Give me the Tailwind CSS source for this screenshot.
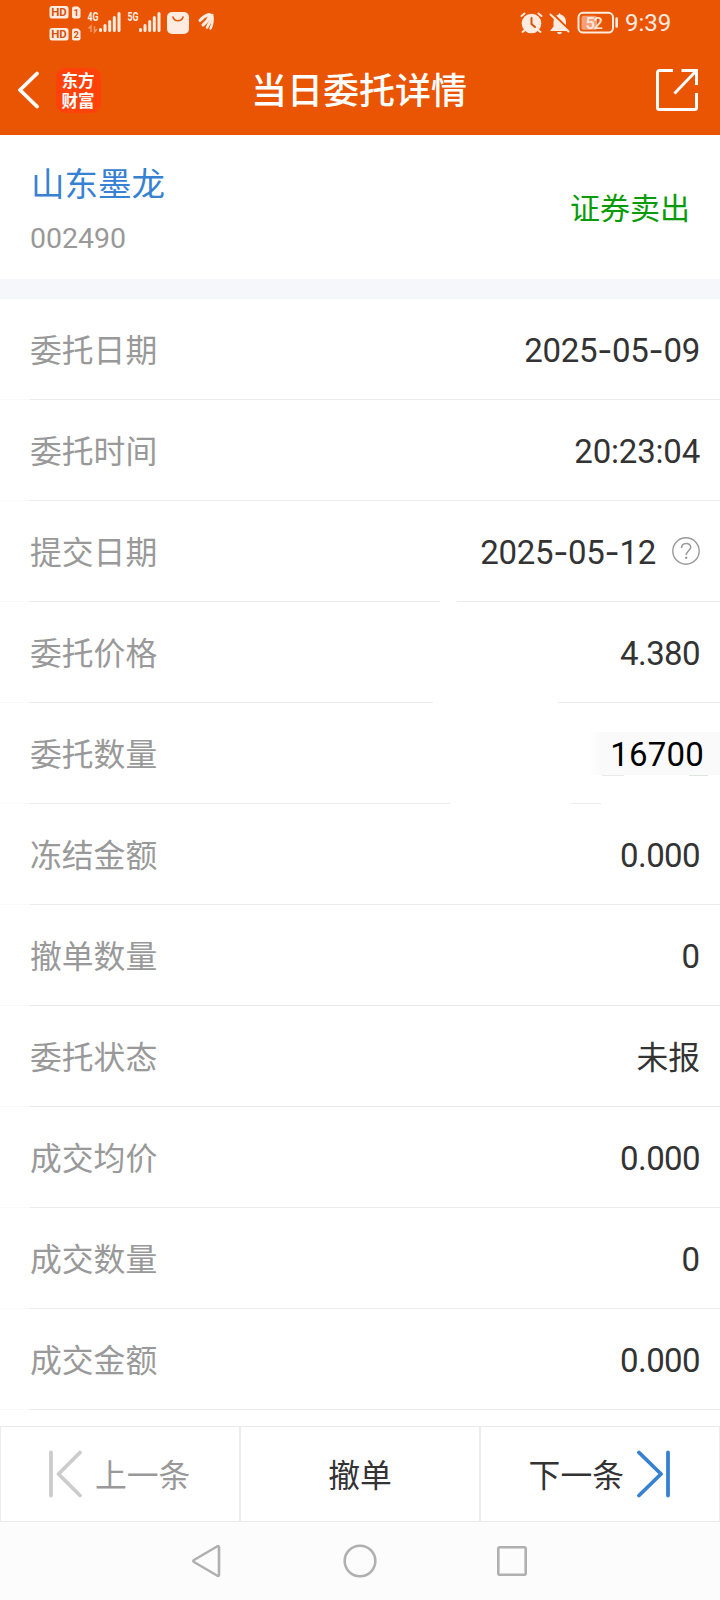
<!DOCTYPE html>
<html lang="zh-CN">
<head>
  <meta charset="UTF-8">
  <title>当日委托详情</title>
  <meta name="viewport" content="width=device-width, initial-scale=1.0">
  <script src="https://cdn.jsdelivr.net/npm/@tailwindcss/browser@4"></script>
</head>

<body class="w-[720px] h-[1600px] overflow-hidden flex flex-col bg-white text-[#333] font-['Roboto','Noto_Sans_CJK_SC',sans-serif]">
  <header class="h-[135px] shrink-0 bg-[#ea5504] text-white">
    <!-- Status bar -->
    <div class="h-[45px] flex items-center justify-between pl-[49px] pr-[49px] text-[#ffece0]">
      <div class="flex items-start">
        <svg class="w-[170px] h-[45px]" viewBox="49 0 170 45" fill="currentColor">
          <g>
            <rect x="49.500" y="6" width="19" height="12.500" rx="2.500" />
            <path d="M72 8.500a2 2 0 0 1 2-2h4l2.500 2.500v7.500a2 2 0 0 1-2 2H74a2 2 0 0 1-2-2z" />
            <rect x="49.500" y="28" width="19" height="12.500" rx="2.500" />
            <path d="M72 30.500a2 2 0 0 1 2-2h4l2.500 2.500v7.500a2 2 0 0 1-2 2H74a2 2 0 0 1-2-2z" />
          </g>
          <g fill="#d9520c" font-family="Roboto, sans-serif" font-weight="700">
            <text x="51.300" y="16.400" font-size="11.500" textLength="15.500">HD</text>
            <text x="73.500" y="16" font-size="9.500">1</text>
            <text x="51.300" y="38.400" font-size="11.500" textLength="15.500">HD</text>
            <text x="73.500" y="38" font-size="9.500">2</text>
          </g>
          <g font-family="Roboto, sans-serif" font-weight="700" font-size="12.500">
            <text x="87.500" y="21" textLength="11" lengthAdjust="spacingAndGlyphs">4G</text>
            <text x="127.500" y="21" textLength="11" lengthAdjust="spacingAndGlyphs">5G</text>
          </g>
          <path d="M91 32v-6l-2.500 2.500M94.500 26v6l2.500-3" fill="none" stroke="currentColor" stroke-width="1.500" opacity=".45" />
          <g fill="none" stroke="currentColor" stroke-width="3" stroke-linecap="round">
            <path d="M100.500 29.500v1M105 25.500v5M109.700 21.500v9M114.300 17.500v13M119 13.500v17" />
            <path d="M140.500 29.500v1M145 25.500v5M149.700 21.500v9M154.300 17.500v13M159 13.500v17" />
          </g>
          <rect x="167" y="12" width="22" height="22" rx="5" />
          <path d="M173 17c1.500 5 8.500 5 10 0" fill="none" stroke="#ea5504" stroke-width="1.600" stroke-linecap="round" />
          <!-- Four fanned feathers -->
          <g fill="none" stroke="currentColor" stroke-linecap="round">
            <path d="M200 20.500q3.500-4.500 9-6" stroke-width="3" />
            <path d="M203 25q4.500-3.500 7.500-10" stroke-width="3" />
            <path d="M207 27.500q3.500-5 4.500-12" stroke-width="2.600" />
            <path d="M210.500 28.500q3-6 1.800-13.500" stroke-width="2.400" />
          </g>
        </svg>
      </div>
      <div class="flex items-center">
        <svg class="w-[100px] h-[45px]" viewBox="519 0 100 45" fill="none" stroke="currentColor" stroke-linecap="round">
          <circle cx="531.500" cy="23.500" r="9.800" fill="currentColor" stroke="none" />
          <path d="M521.500 16l3-2.500M541.500 16l-3-2.500M525 30l-2.500 2M538 30l2.500 2" stroke-width="2" />
          <path d="M531.500 18v6l3.500 3" stroke="#d9520c" stroke-width="2" />
          <path d="M550 31l3.500-4.500V22q0-6 5-7.500 1-3 2 0 5.500 1.500 5.500 7.500v4.500l3.500 4.500z" fill="currentColor" stroke="none" />
          <path d="M557 32h5q-.5 2.300-2.500 2.300T557 32z" fill="currentColor" stroke="none" />
          <path d="M552 13l19 18.500" stroke="#ea5504" stroke-width="2.200" />
          <path d="M550.500 14.500l18 17" stroke-width="2" />
          <rect x="578.500" y="12.800" width="34.500" height="19.800" rx="4.500" stroke-width="2" />
          <rect x="581.500" y="15.800" width="15.500" height="14" rx="2" fill="#f3a078" stroke="none" />
          <path d="M616.700 18.500v8" stroke-width="2.600" />
          <text x="585.500" y="28.600" font-family="Roboto, sans-serif" font-size="16.500" font-weight="500" fill="currentColor" stroke="none" textLength="17.500">52</text>
        </svg>
        <span class="w-[52px] pl-[6px] pt-[2px] text-[24px] leading-[43px] whitespace-nowrap">9:39</span>
      </div>
    </div>
    <!-- Title bar -->
    <div class="h-[90px] grid grid-cols-3 items-center pl-[17px] pr-[21px]">
      <div class="flex items-center gap-[16px]">
        <svg class="w-[23px] h-[38px]" viewBox="0 0 23 38" fill="none" stroke="currentColor" stroke-width="3.800" stroke-linecap="round" stroke-linejoin="round">
          <path d="M20 2.500L3 19l17 16.500" />
        </svg>
        <p class="w-[45px] h-[45px] pt-[2px] pr-px rounded-[9px] bg-[#ff4209] text-center font-['Noto_Sans_CJK_SC',sans-serif] font-bold text-[16.500px] leading-[20px]">东方<br>财富</p>
      </div>
      <h1 class="pl-[2px] pt-[5px] text-center text-[36px] leading-[45px] font-medium whitespace-nowrap">当日委托详情</h1>
      <svg class="w-[44px] h-[44px] justify-self-end" viewBox="0 0 44 44" fill="none" stroke="currentColor" stroke-width="3">
        <path d="M18 2.500H4.500a2 2 0 0 0-2 2v35a2 2 0 0 0 2 2h35a2 2 0 0 0 2-2V25M26.500 2.500h15V17M41 3L19.500 25.500" />
      </svg>
    </div>
  </header>

  <main class="flex-1">
    <section class="h-[144px] pt-[2px] flex items-center justify-between pl-[30px] pr-[30px]">
      <div>
        <h2 class="pl-px text-[33.500px] leading-[48px] text-[#3681d2]">山东墨龙</h2>
        <p class="mt-[10px] mb-[-3px] text-[28.500px] leading-[40px] text-[#999]">002490</p>
      </div>
      <span class="pt-[2px] text-[30px] leading-[40px] text-[#0a9b0a]">证券卖出</span>
    </section>
    <div class="h-[20px] bg-[#f5f7fa]"></div>

    <dl class="text-[33px]">
      <div class="relative h-[101px] pt-[2px] pl-[30px] pr-[20px] flex items-center justify-between">
        <dt class="pt-[2px] text-[31.800px] text-[#999]">委托日期</dt>
        <dd class="tracking-[-0.3px]">2025<span class="font-['Inter']">-</span>05<span class="font-['Inter']">-</span>09</dd>
        <i class="absolute bottom-0 left-0 w-[30px] h-px bg-[#f9f9f9]"></i>
        <i class="absolute bottom-0 left-[30px] right-0 h-px bg-[#ebebeb]"></i>
      </div>
      <div class="relative h-[101px] pt-[2px] pl-[30px] pr-[20px] flex items-center justify-between">
        <dt class="pt-[2px] text-[31.800px] text-[#999]">委托时间</dt>
        <dd class="tracking-[-0.2px]">20:23:04</dd>
        <i class="absolute bottom-0 left-0 w-[30px] h-px bg-[#f9f9f9]"></i>
        <i class="absolute bottom-0 left-[30px] right-0 h-px bg-[#ebebeb]"></i>
      </div>
      <div class="relative h-[101px] pt-[2px] pl-[30px] pr-[20px] flex items-center justify-between">
        <dt class="pt-[2px] text-[31.800px] text-[#999]">提交日期</dt>
        <dd class="flex items-center gap-[16px]">
          <span class="tracking-[-0.3px]">2025<span class="font-['Inter']">-</span>05<span class="font-['Inter']">-</span>12</span>
          <svg class="w-[28px] h-[28px] mb-[4px]" viewBox="0 0 28 28" fill="none" stroke="#999" stroke-width="1.400">
            <circle cx="14" cy="14" r="13.200" />
            <path d="M9.500 11c0-6 9.200-6 9.200-.8 0 3.300-4.500 3.800-4.500 7.800" stroke-width="1.500" />
            <circle cx="14.200" cy="20.800" r="1.200" fill="#999" stroke="none" />
          </svg>
        </dd>
        <i class="absolute bottom-0 left-0 w-[30px] h-px bg-[#f9f9f9]"></i>
        <i class="absolute bottom-0 left-[30px] w-[410px] h-px bg-[#ebebeb]"></i>
        <i class="absolute bottom-0 left-[457px] right-0 h-px bg-[#ebebeb]"></i>
      </div>
      <div class="relative h-[101px] pt-[2px] pl-[30px] pr-[20px] flex items-center justify-between">
        <dt class="pt-[2px] text-[31.800px] text-[#999]">委托价格</dt>
        <dd class="tracking-[-0.6px]">4.380</dd>
        <i class="absolute bottom-0 left-0 w-[30px] h-px bg-[#f9f9f9]"></i>
        <i class="absolute bottom-0 left-[30px] w-[403px] h-px bg-[#ebebeb]"></i>
        <i class="absolute bottom-0 left-[558px] right-0 h-px bg-[#ebebeb]"></i>
      </div>
      <div class="relative h-[101px] pt-[2px] pl-[30px] flex items-center justify-between">
        <dt class="pt-[2px] text-[31.800px] text-[#999]">委托数量</dt>
        <dd class="w-[132px] h-[43px] mb-[2px] pt-[3px] pr-[16px] flex items-center justify-end bg-linear-to-r from-white to-[#fafafa] to-10% text-black tracking-[0.2px]">16700</dd>
        <i class="absolute bottom-[28px] left-[602px] w-[22px] h-px bg-[#e8eae8]"></i>
        <i class="absolute bottom-[28px] left-[689px] w-[19px] h-px bg-[#e0e6e0]"></i>
        <i class="absolute bottom-0 left-0 w-[30px] h-px bg-[#f9f9f9]"></i>
        <i class="absolute bottom-0 left-[30px] w-[420px] h-px bg-[#ebebeb]"></i>
        <i class="absolute bottom-0 left-[571px] w-[30px] h-px bg-[#ebebeb]"></i>
      </div>
      <div class="relative h-[101px] pt-[2px] pl-[30px] pr-[20px] flex items-center justify-between">
        <dt class="pt-[2px] text-[31.800px] text-[#999]">冻结金额</dt>
        <dd class="tracking-[-0.6px]">0.000</dd>
        <i class="absolute bottom-0 left-0 w-[30px] h-px bg-[#f9f9f9]"></i>
        <i class="absolute bottom-0 left-[30px] right-0 h-px bg-[#ebebeb]"></i>
      </div>
      <div class="relative h-[101px] pt-[2px] pl-[30px] pr-[20px] flex items-center justify-between">
        <dt class="pt-[2px] text-[31.800px] text-[#999]">撤单数量</dt>
        <dd>0</dd>
        <i class="absolute bottom-0 left-0 w-[30px] h-px bg-[#f9f9f9]"></i>
        <i class="absolute bottom-0 left-[30px] right-0 h-px bg-[#ebebeb]"></i>
      </div>
      <div class="relative h-[101px] pt-[2px] pl-[30px] pr-[20px] flex items-center justify-between">
        <dt class="pt-[2px] text-[31.800px] text-[#999]">委托状态</dt>
        <dd class="pt-[2px] text-[31.800px]">未报</dd>
        <i class="absolute bottom-0 left-0 w-[30px] h-px bg-[#f9f9f9]"></i>
        <i class="absolute bottom-0 left-[30px] right-0 h-px bg-[#ebebeb]"></i>
      </div>
      <div class="relative h-[101px] pt-[2px] pl-[30px] pr-[20px] flex items-center justify-between">
        <dt class="pt-[2px] text-[31.800px] text-[#999]">成交均价</dt>
        <dd class="tracking-[-0.6px]">0.000</dd>
        <i class="absolute bottom-0 left-0 w-[30px] h-px bg-[#f9f9f9]"></i>
        <i class="absolute bottom-0 left-[30px] right-0 h-px bg-[#ebebeb]"></i>
      </div>
      <div class="relative h-[101px] pt-[2px] pl-[30px] pr-[20px] flex items-center justify-between">
        <dt class="pt-[2px] text-[31.800px] text-[#999]">成交数量</dt>
        <dd>0</dd>
        <i class="absolute bottom-0 left-0 w-[30px] h-px bg-[#f9f9f9]"></i>
        <i class="absolute bottom-0 left-[30px] right-0 h-px bg-[#ebebeb]"></i>
      </div>
      <div class="relative h-[101px] pt-[2px] pl-[30px] pr-[20px] flex items-center justify-between">
        <dt class="pt-[2px] text-[31.800px] text-[#999]">成交金额</dt>
        <dd class="tracking-[-0.6px]">0.000</dd>
        <i class="absolute bottom-0 left-0 w-[30px] h-px bg-[#f9f9f9]"></i>
        <i class="absolute bottom-0 left-[30px] right-0 h-px bg-[#ebebeb]"></i>
      </div>
    </dl>
  </main>

  <!-- Previous / cancel / next -->
  <div class="h-[96px] shrink-0 grid grid-cols-[240px_240px_1fr] border border-[#ebebeb] text-[31.800px]">
    <button class="flex items-center pl-[47px] gap-[12px] border-r-2 border-[#ebebeb] text-[#999]">
      <svg class="w-[35px] h-[48px] mb-px" viewBox="0 0 35 48" fill="none" stroke="#ccc" stroke-width="3.800" stroke-linecap="round" stroke-linejoin="round">
        <path d="M3 2.500v43M32 2.500L10.500 24 32 45.500" />
      </svg>
      <span class="pt-[5px]">上一条</span>
    </button>
    <button class="pt-[5px] border-r-2 border-[#ebebeb]">撤单</button>
    <button class="flex items-center justify-end pr-[48px] gap-[12px]">
      <span class="pt-[5px]">下一条</span>
      <svg class="w-[35px] h-[48px] mb-px" viewBox="0 0 35 48" fill="none" stroke="#3681d2" stroke-width="3.800" stroke-linecap="round" stroke-linejoin="round">
        <path d="M32 2.500v43M3 2.500L25 24 3 45.500" />
      </svg>
    </button>
  </div>

  <!-- System navigation -->
  <nav class="h-[78px] shrink-0 flex items-center justify-center gap-[120px] pr-[5px] bg-[#fcfcfc]">
    <svg class="w-[34px] h-[34px]" viewBox="0 0 34 34" fill="none" stroke="#b0b0b0" stroke-width="2.600" stroke-linejoin="round">
      <path d="M30 3.500q0-2-2-1L5 16q-1.500 1 0 2l23 13.500q2 1 2-1z" />
    </svg>
    <svg class="w-[34px] h-[34px]" viewBox="0 0 34 34" fill="none" stroke="#b0b0b0" stroke-width="2.600">
      <circle cx="17" cy="17" r="15.300" />
    </svg>
    <svg class="w-[30px] h-[30px]" viewBox="0 0 30 30" fill="none" stroke="#b0b0b0" stroke-width="2.600">
      <rect x="1.300" y="1.300" width="27.400" height="27.400" rx="1.500" />
    </svg>
  </nav>
</body>
</html>
